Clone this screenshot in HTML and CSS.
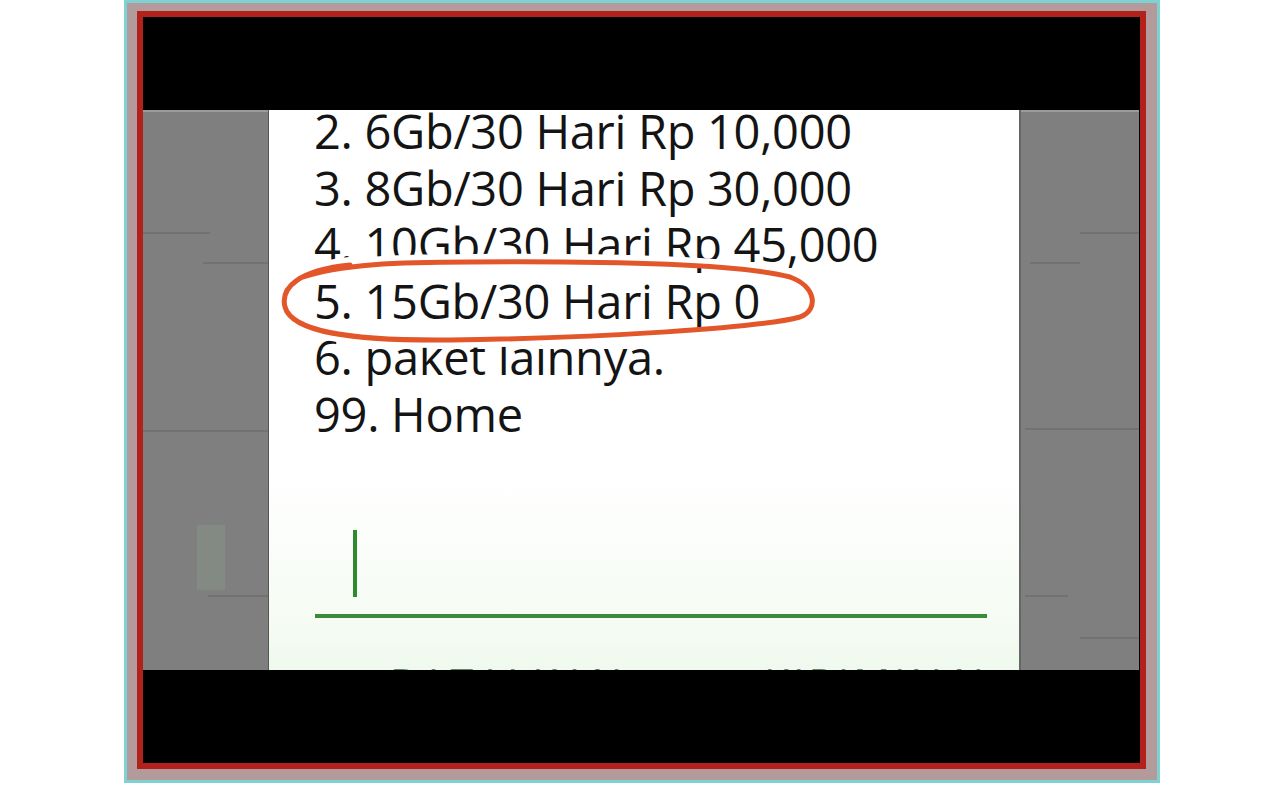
FILE: index.html
```html
<!DOCTYPE html>
<html>
<head>
<meta charset="utf-8">
<link rel="stylesheet" href="styles.css">
</head>
<body>
<div class="frame">
  <div class="red">
    <div class="band"></div>
    <div class="middle">
      <div class="side side-left">
        <i class="ln" style="top:120px;left:0;width:67px"></i>
        <i class="ln" style="top:150px;left:60px;width:65px"></i>
        <i class="ln" style="top:318px;left:0;width:125px"></i>
        <i class="ghost"></i>
        <i class="ln" style="top:483px;left:65px;width:60px"></i>
      </div>
      <div class="dialog">
        <div class="list">
          <div class="row">2. 6Gb/30 Hari Rp 10,000</div>
          <div class="row">3. 8Gb/30 Hari Rp 30,000</div>
          <div class="row">4. 10Gb/30 Hari Rp 45,000</div>
          <div class="row">5. 15Gb/30 Hari Rp 0</div>
          <div class="row">6. paket lainnya.</div>
          <div class="row">99. Home</div>
        </div>
        <div class="field">
          <div class="cursor"></div>
          <div class="underline"></div>
        </div>
        <div class="buttons">
          <span class="btn">BATALKAN</span>
          <span class="btn">KIRIMKAN</span>
        </div>
      </div>
      <div class="side side-right">
        <i class="ln" style="top:120px;left:59px;width:59px"></i>
        <i class="ln" style="top:150px;left:9px;width:50px"></i>
        <i class="ln" style="top:316px;left:4px;width:114px"></i>
        <i class="ln" style="top:483px;left:4px;width:43px"></i>
        <i class="ln" style="top:525px;left:59px;width:59px"></i>
      </div>
    </div>
    <div class="band"></div>
  </div>
</div>
<svg class="mark" width="1283" height="785" viewBox="0 0 1283 785">
  <defs>
    <mask id="outside" maskUnits="userSpaceOnUse" x="0" y="0" width="1283" height="785">
      <rect x="0" y="0" width="1283" height="785" fill="#fff"/>
      <path d="M350 265 C300 270 280 287 285 307 C292 332 350 341 450 340 C600 338 760 328 800 317 C820 309 815 286 790 277 C740 264 600 261 470 262 C400 262 340 264 300 278 Z" fill="#000"/>
    </mask>
  </defs>
  <path class="halo" mask="url(#outside)" d="M350 265 C300 270 280 287 285 307 C292 332 350 341 450 340 C600 338 760 328 800 317 C820 309 815 286 790 277 C740 264 600 261 470 262 C400 262 340 264 300 278"/>
  <path class="ring" d="M350 265 C300 270 280 287 285 307 C292 332 350 341 450 340 C600 338 760 328 800 317 C820 309 815 286 790 277 C740 264 600 261 470 262 C400 262 340 264 300 278"/>
</svg>
</body>
</html>
```
FILE: styles.css
```css
html, body {
  margin: 0;
  padding: 0;
  background: #ffffff;
}
body {
  width: 1283px;
  height: 785px;
  overflow: hidden;
  position: relative;
}
.frame {
  margin-left: 124px;
  width: 1036px;
  height: 783px;
  box-sizing: border-box;
  border: 3px solid #7fd2d4;
  background: #b39b9b;
  padding: 8px 11px 11px 10px;
}
.red {
  height: 100%;
  box-sizing: border-box;
  border: 6px solid #b3211c;
  background: #000;
  display: flex;
  flex-direction: column;
}
.band {
  height: 93px;
  flex: none;
  background: #000;
}
.middle {
  height: 560px;
  flex: none;
  display: flex;
}
.side {
  position: relative;
  background: #7f7f7f;
  border-top: 2px solid #9c9c9c;
  box-sizing: border-box;
}
.side-left { width: 125px; }
.side-right { width: 118px; }
.ln {
  position: absolute;
  height: 2px;
  background: #727272;
}
.ghost {
  position: absolute;
  left: 54px;
  top: 413px;
  width: 28px;
  height: 65px;
  background: #838983;
}
.dialog {
  width: 753px;
  box-sizing: border-box;
  border-left: 1px solid #555;
  border-right: 2px solid #666;
  overflow: hidden;
  display: flex;
  flex-direction: column;
  background: linear-gradient(to bottom, #ffffff 0px, #ffffff 360px, #f5fbf3 520px, #eff9ed 560px);
}
.list {
  margin-top: -7px;
  padding-left: 45px;
  font-family: "Open Sans", "DejaVu Sans", sans-serif;
  font-size: 47px;
  font-weight: 500;
  line-height: 56.5px;
  letter-spacing: -0.3px;
  color: #141414;
  white-space: nowrap;
}
.field {
  margin-top: 88px;
  margin-left: 46px;
  width: 672px;
}
.cursor {
  margin-left: 38px;
  width: 4px;
  height: 67px;
  background: #2f8a2f;
}
.underline {
  margin-top: 17px;
  height: 4px;
  background: #3a8c3a;
}
.buttons {
  margin-top: 44px;
  display: flex;
  justify-content: space-between;
  padding: 0 31px 0 121px;
  font-family: "Open Sans", "DejaVu Sans", sans-serif;
  font-size: 41px;
  line-height: 41px;
  letter-spacing: 4px;
  color: #5d8a5d;
}
.mark {
  position: absolute;
  left: 0;
  top: 0;
  pointer-events: none;
}
.halo {
  fill: none;
  stroke: #ffffff;
  stroke-width: 16;
  stroke-linecap: round;
}
.ring {
  fill: none;
  stroke: #e2562a;
  stroke-width: 5;
  stroke-linecap: round;
}
```
